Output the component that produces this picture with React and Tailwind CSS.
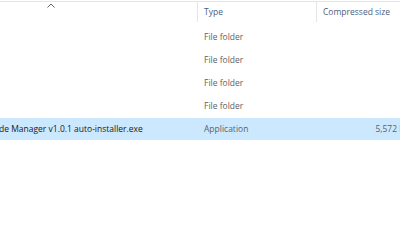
import React from 'react';

const rows = [
    { name: '', type: 'File folder', size: '' },
    { name: '', type: 'File folder', size: '' },
    { name: '', type: 'File folder', size: '' },
    { name: '', type: 'File folder', size: '' },
    { name: 'de Manager v1.0.1 auto-installer.exe', type: 'Application', size: '5,572 KB', selected: true },
];

const App = () => {
    return (
        <div className="w-[400px] h-[242px] overflow-hidden bg-white text-[8.5px] font-['Open_Sans','Noto_Sans',sans-serif]">
            {/* Column header */}
            <div className="flex h-[25px] border-t border-[#e5e5e5] mt-[1px] w-[430px]">
                <div className="relative w-[198px] shrink-0 border-r border-[#e5e5e5] mb-[4px]">
                    <svg className="absolute left-[47px] top-[1px]" width="8" height="5" viewBox="0 0 8 5">
                        <path d="M0.5 4.5 L4 1 L7.5 4.5" fill="none" stroke="#606060" strokeWidth="1" />
                    </svg>
                </div>
                <div className="w-[119px] shrink-0 border-r border-[#e5e5e5] mb-[4px] pl-[6px] pt-[4px] text-[#4c607a]">Type</div>
                <div className="w-[100px] shrink-0 border-r border-[#e5e5e5] mb-[4px] pl-[6px] pt-[4px] text-[#4c607a]">Compressed size</div>
            </div>

            {/* Rows */}
            <div className="flex flex-col gap-[1px] w-[430px]">
                {rows.map((r, i) => (
                    <div key={i} className={`flex h-[22px] items-center ${r.selected ? 'bg-[#cce8ff]' : ''}`}>
                        <div className="w-[198px] shrink-0 whitespace-nowrap overflow-hidden text-[#1a1a1a] ml-[-1px]">{r.name}</div>
                        <div className="w-[119px] shrink-0 pl-[7px] text-[#5f5f5f]">{r.type}</div>
                        <div className="w-[100px] shrink-0 text-right pr-[6px] text-[#5f5f5f] whitespace-nowrap">{r.size}</div>
                    </div>
                ))}
            </div>
        </div>
    );
};

export default App;
